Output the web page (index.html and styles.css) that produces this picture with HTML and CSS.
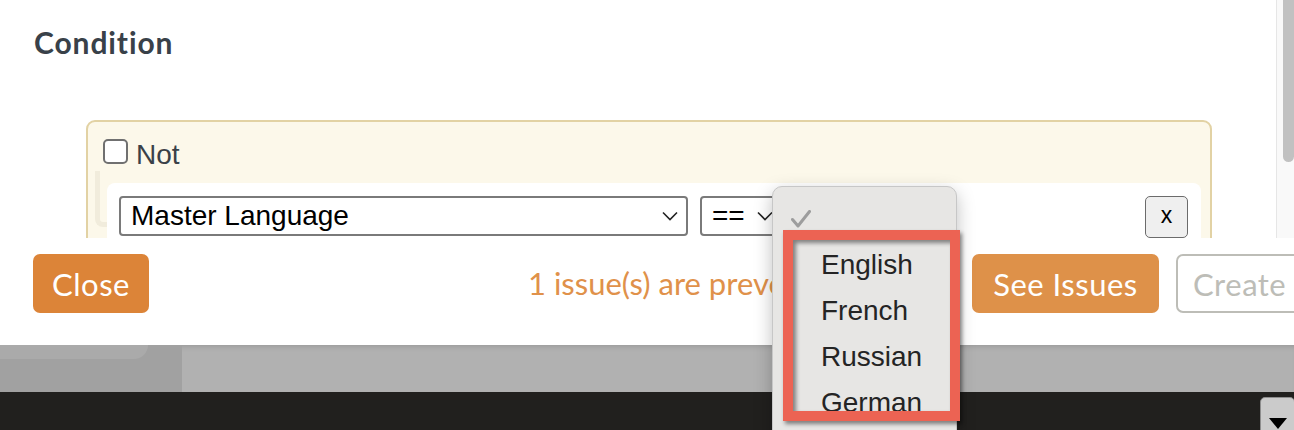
FILE: index.html
```html
<!DOCTYPE html>
<html lang="en">
<head>
    <meta charset="UTF-8">
    <meta name="viewport" content="width=device-width, initial-scale=1.0">
    <title>Condition</title>
    <link rel="stylesheet" href="styles.css">
</head>
<body>
    <div class="screen">
        <div class="modal">
            <div class="modal-body">
                <div class="content">
                    <h2 class="title">Condition</h2>
                    <div class="group">
                        <label class="not-row"><input type="checkbox" class="checkbox"><span>Not</span></label>
                        <div class="branch">
                            <div class="connector"></div>
                            <div class="rule">
                                <div class="select select-field">
                                    <span>Master Language</span>
                                    <svg class="chevron" width="16" height="10" viewBox="0 0 16 10"><path d="M1 1.5 L8 8.5 L15 1.5" fill="none" stroke="#222" stroke-width="1.6"/></svg>
                                </div>
                                <div class="select select-op">
                                    <span>==</span>
                                    <svg class="chevron" width="16" height="10" viewBox="0 0 16 10"><path d="M1 1.5 L8 8.5 L15 1.5" fill="none" stroke="#222" stroke-width="1.6"/></svg>
                                </div>
                                <button class="remove">x</button>
                            </div>
                        </div>
                    </div>
                </div>
                <div class="scrollbar"><div class="thumb"></div></div>
            </div>
            <div class="modal-footer">
                <button class="btn btn-close">Close</button>
                <p class="issues">1 issue(s) are preventing creation</p>
                <button class="btn btn-issues">See Issues</button>
                <button class="btn btn-create">Create</button>
            </div>
        </div>
        <div class="backdrop">
            <div class="backdrop-panel"><div class="backdrop-tab"></div></div>
        </div>
        <div class="taskbar">
            <button class="corner-btn">
                <svg width="18" height="12" viewBox="0 0 18 12"><path d="M0 0 H18 L9 11 Z" fill="#000"/></svg>
            </button>
        </div>

        <!-- native select popup, open over the page -->
        <div class="menu">
            <div class="menu-item">
                <span class="check"><svg width="20" height="18" viewBox="0 0 20 18"><path d="M1.5 9.5 L7 16 L18.5 1.5" fill="none" stroke="#9d9d9d" stroke-width="3" stroke-linecap="round" stroke-linejoin="round"/></svg></span>
            </div>
            <div class="menu-item"><span class="check"></span>English</div>
            <div class="menu-item"><span class="check"></span>French</div>
            <div class="menu-item"><span class="check"></span>Russian</div>
            <div class="menu-item"><span class="check"></span>German</div>
        </div>
        <div class="annotation"></div>
    </div>
</body>
</html>
```

FILE: styles.css
```css
body {
    margin: 0;
    font-family: "Liberation Sans", Arial, sans-serif;
    background-color: #21201e;
}
.screen {
    position: relative;
    width: 1294px;
    height: 430px;
    overflow: hidden;
}
.modal {
    background-color: #ffffff;
}
.modal-body {
    display: flex;
    height: 238px;
    overflow: hidden;
}
.content {
    flex: 1;
    padding: 24px 0 0 34px;
}
.title {
    margin: 0;
    font-family: Lato, sans-serif;
    font-weight: 700;
    font-size: 30px;
    line-height: 36px;
    letter-spacing: 0.9px;
    color: #394149;
}
.group {
    box-sizing: border-box;
    width: 1126px;
    height: 200px;
    margin: 60px 0 0 52px;
    padding: 17px 0 0 15px;
    background-color: #fcf8ea;
    border: 2px solid #e2d2a4;
    border-radius: 9px;
}
.not-row {
    display: flex;
    align-items: flex-start;
    gap: 8px;
    font-size: 28px;
    line-height: 32px;
    color: #3a4148;
}
.checkbox {
    appearance: none;
    -webkit-appearance: none;
    box-sizing: border-box;
    width: 25px;
    height: 25px;
    margin: 0;
    background-color: #ffffff;
    border: 2px solid #707070;
    border-radius: 5px;
}
.branch {
    display: flex;
    align-items: flex-start;
    margin-left: -8px;
}
.connector {
    box-sizing: border-box;
    width: 12px;
    height: 56px;
    border-left: 5px solid #f1ecdc;
    border-bottom: 5px solid #f1ecdc;
    border-bottom-left-radius: 8px;
}
.rule {
    display: flex;
    align-items: flex-start;
    gap: 12px;
    box-sizing: border-box;
    width: 1094px;
    height: 80px;
    margin-top: 12px;
    padding: 13px 13px 0 12px;
    background-color: #ffffff;
    border-radius: 8px;
}
.select {
    display: flex;
    align-items: center;
    justify-content: space-between;
    box-sizing: border-box;
    height: 40px;
    padding: 0 8px 0 10px;
    border: 2px solid #7a7a7a;
    border-radius: 4px;
    background-color: #ffffff;
    font-size: 28px;
    color: #000000;
}
.select-field {
    width: 569px;
}
.select-op {
    width: 84px;
    justify-content: flex-start;
    gap: 12px;
}
.remove {
    box-sizing: border-box;
    width: 43px;
    height: 42px;
    margin-left: auto;
    padding: 0 0 4px 0;
    background-color: #efefef;
    border: 1.5px solid #6b6b6b;
    border-radius: 5px;
    font-family: "Liberation Sans", Arial, sans-serif;
    font-size: 23px;
    color: #000000;
}
.scrollbar {
    box-sizing: border-box;
    width: 18px;
    background-color: #f9f9f9;
    border-left: 1px solid #e6e6e6;
}
.thumb {
    width: 11px;
    height: 162px;
    margin-left: 6px;
    background-color: #c1c1c1;
    border-radius: 0 0 6px 6px;
}
.modal-footer {
    display: flex;
    align-items: flex-start;
    box-sizing: border-box;
    height: 107px;
    padding: 16px 0 0 33px;
    overflow: hidden;
    font-family: Lato, sans-serif;
}
.btn {
    flex-shrink: 0;
    box-sizing: border-box;
    height: 59px;
    padding: 0;
    border: none;
    border-radius: 7px;
    font-family: Lato, sans-serif;
    font-size: 31px;
    letter-spacing: 0.5px;
    color: #ffffff;
}
.btn-close {
    width: 116px;
    background-color: #dc8438;
}
.issues {
    flex-shrink: 0;
    width: 432px;
    margin: 0 0 0 379px;
    line-height: 59px;
    font-size: 31px;
    color: #e0914a;
    white-space: nowrap;
    overflow: hidden;
}
.btn-issues {
    width: 187px;
    margin-left: 12px;
    background-color: #de9149;
}
.btn-create {
    width: 170px;
    margin-left: 17px;
    background-color: #ffffff;
    border: 2px solid #bdbdb7;
    color: #bdbdb7;
    text-align: left;
    padding-left: 15px;
}
.backdrop {
    height: 47px;
    background-color: #b1b1b1;
    box-shadow: inset 0 5px 5px -3px rgba(0, 0, 0, 0.12);
}
.backdrop-panel {
    width: 182px;
    height: 47px;
    background-color: #a1a1a1;
}
.backdrop-tab {
    width: 148px;
    height: 14px;
    background-color: #aaaaaa;
    border-bottom-right-radius: 20px;
}
.taskbar {
    display: flex;
    justify-content: flex-end;
    height: 38px;
    background-color: #21201e;
}
.corner-btn {
    box-sizing: border-box;
    width: 35px;
    height: 40px;
    margin-top: 5px;
    margin-right: -1px;
    padding: 17px 0 0 0;
    background-color: #cbcbcb;
    border: 1px solid #8d8d8d;
    border-radius: 5px;
}
.menu {
    position: absolute;
    left: 772px;
    top: 186px;
    box-sizing: border-box;
    width: 185px;
    height: 262px;
    padding-top: 9px;
    background-color: #e7e6e4;
    border: 1px solid #c7c7c7;
    border-radius: 10px;
    box-shadow: 0 6px 18px rgba(0, 0, 0, 0.25);
}
.menu-item {
    display: flex;
    align-items: center;
    height: 46px;
    padding-left: 18px;
    font-size: 28px;
    color: #242424;
}
.check {
    display: flex;
    align-items: center;
    width: 30px;
}
.annotation {
    position: absolute;
    left: 783px;
    top: 230px;
    box-sizing: border-box;
    width: 177px;
    height: 191px;
    border: 10px solid #ec6353;
    box-shadow: 2px 3px 4px rgba(0, 0, 0, 0.45), inset 3px 3px 4px rgba(0, 0, 0, 0.45);
}
```
